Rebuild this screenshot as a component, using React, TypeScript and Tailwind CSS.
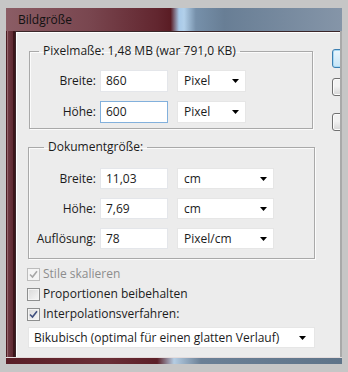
import React from "react";

function Arrow() {
  return (
    <svg width="7" height="4" viewBox="0 0 7 4" className="shrink-0">
      <polygon points="0,0 7,0 3.5,4" fill="#000" />
    </svg>
  );
}

function Check({ color }: { color: string }) {
  return (
    <svg width="9" height="9" viewBox="0 0 9 9">
      <path d="M1 4.5 L3.5 7 L8 1.2" fill="none" stroke={color} strokeWidth="1.6" />
    </svg>
  );
}

function CheckBox({ checked, disabled }: { checked?: boolean; disabled?: boolean }) {
  return (
    <div
      className={
        disabled
          ? "w-[13px] h-[13px] border border-[#bcbcbc] bg-[#f4f4f4] flex items-center justify-center shrink-0"
          : "w-[13px] h-[13px] border border-[#8e8f8f] bg-[linear-gradient(135deg,#d9d9d9,#f7f7f7)] shadow-[inset_0_0_0_1px_#f4f4f4] flex items-center justify-center shrink-0"
      }
    >
      {checked ? <Check color={disabled ? "#a6a6a6" : "#3f4f7e"} /> : null}
    </div>
  );
}

function Row({
  label,
  value,
  unit,
  focused,
  h,
  selW,
}: {
  label: string;
  value: string;
  unit: string;
  focused?: boolean;
  h: string;
  selW: string;
}) {
  return (
    <div className="flex items-center">
      <div className="w-[66px] text-right">{label}</div>
      <div
        className={
          "ml-[4px] w-[68px] " +
          h +
          " bg-white pl-[5px] flex items-center border " +
          (focused ? "border-[#82b0dc]" : "border-[#e4e6ea]")
        }
      >
        {value}
      </div>
      <div
        className={
          "ml-[9px] " +
          selW +
          " " +
          h +
          " bg-white border border-[#e6e6e6] pl-[6px] pr-[6px] flex items-center justify-between"
        }
      >
        <span>{unit}</span>
        <Arrow />
      </div>
    </div>
  );
}

export default function App() {
  return (
    <div className="w-[348px] h-[372px] bg-[#c6c6c6] pt-[8px] pl-[6px] pr-[6px] pb-[8px] overflow-hidden font-['Open_Sans',sans-serif] text-[12px] leading-[16px] text-[#1b1b1b]">
      <div className="h-full flex flex-col">
        <div className="h-[23px] shrink-0 bg-[linear-gradient(to_right,#8b5d65_0%,#79464f_25%,#62262f_45%,#5a1c24_49%,#a8c9e8_51.5%,#b2d0ea_53%,#7690aa_56.5%,#687e95_65%,#8595a8_100%)] pl-[12px] flex items-center text-[#111]">
          Bildgröße
        </div>
        <div className="flex-1 flex min-h-0">
          <div className="w-[9px] shrink-0 bg-[linear-gradient(to_right,#4d1c22_0px,#4d1c22_1px,#94666c_1px,#94666c_2px,#6e3a42_2px,#5f2a32_7px,#3d161b_7px,#3d161b_9px)]" />
          <div className="flex-1 bg-[#ececec] border-t border-l border-[#3a2629] shadow-[inset_1px_1px_0_#ffffff] overflow-hidden flex pl-[13px]">
            <div className="w-[286px] shrink-0 flex flex-col">
              <fieldset className="mt-[11px] w-[284px] border border-[#a9a9a9] shadow-[inset_1px_1px_0_#fbfbfb,1px_1px_0_#fbfbfb] pb-[5px]">
                <legend className="ml-[9px] px-[4px]">Pixelmaße: 1,48 MB (war 791,0 KB)</legend>
                <div className="mt-[11px] flex flex-col gap-[9px]">
                  <Row label="Breite:" value="860" unit="Pixel" h="h-[22px]" selW="w-[69px]" />
                  <Row label="Höhe:" value="600" unit="Pixel" h="h-[22px]" selW="w-[69px]" focused />
                </div>
              </fieldset>
              <fieldset className="mt-[10px] -ml-[1px] w-[287px] border border-[#a9a9a9] shadow-[inset_1px_1px_0_#fbfbfb,1px_1px_0_#fbfbfb] pb-[9px]">
                <legend className="ml-[15px] px-[4px]">Dokumentgröße:</legend>
                <div className="mt-[13px] flex flex-col gap-[9px] pl-[1px]">
                  <Row label="Breite:" value="11,03" unit="cm" h="h-[21px]" selW="w-[97px]" />
                  <Row label="Höhe:" value="7,69" unit="cm" h="h-[21px]" selW="w-[97px]" />
                  <Row label="Auflösung:" value="78" unit="Pixel/cm" h="h-[21px]" selW="w-[97px]" />
                </div>
              </fieldset>
              <div className="mt-[5px] -ml-[2px] flex flex-col">
                <div className="h-[20px] flex items-center gap-[3px] text-[#8d8d8d]">
                  <CheckBox checked disabled />
                  <span>Stile skalieren</span>
                </div>
                <div className="h-[20px] flex items-center gap-[3px]">
                  <CheckBox />
                  <span>Proportionen beibehalten</span>
                </div>
                <div className="h-[20px] flex items-center gap-[3px]">
                  <CheckBox checked />
                  <span>Interpolationsverfahren:</span>
                </div>
              </div>
              <div className="mt-[3px] -ml-[1px] w-[287px] h-[21px] bg-white border border-[#e6e6e6] pl-[5px] pr-[8px] flex items-center justify-between">
                <span>Bikubisch (optimal für einen glatten Verlauf)</span>
                <Arrow />
              </div>
            </div>
            <div className="ml-[17px] flex flex-col shrink-0">
              <div className="mt-[17px] w-[75px] h-[19px] rounded-[3px] border border-[#3c7fb1] shadow-[inset_0_0_0_1px_#a6d8f4] bg-[linear-gradient(#eaf6fd,#c6e5f7)]" />
              <div className="mt-[10px] w-[75px] h-[18px] rounded-[3px] border border-[#707070] shadow-[inset_0_0_0_1px_#fcfcfc] bg-[linear-gradient(#f2f2f2_45%,#d6d6d6)]" />
              <div className="mt-[17px] w-[75px] h-[18px] rounded-[3px] border border-[#707070] shadow-[inset_0_0_0_1px_#fcfcfc] bg-[linear-gradient(#f2f2f2_45%,#d6d6d6)]" />
            </div>
          </div>
          <div className="w-[2px] shrink-0 bg-[#a9a9a9]" />
        </div>
        <div className="h-[7px] shrink-0 border-t border-[#e4dcdc] bg-[linear-gradient(to_right,#5a1f27_0%,#6a2e36_30%,#5c2028_45%,#b5cde3_50%,#6b8096_58%,#5f7489_100%)]" />
      </div>
    </div>
  );
}
